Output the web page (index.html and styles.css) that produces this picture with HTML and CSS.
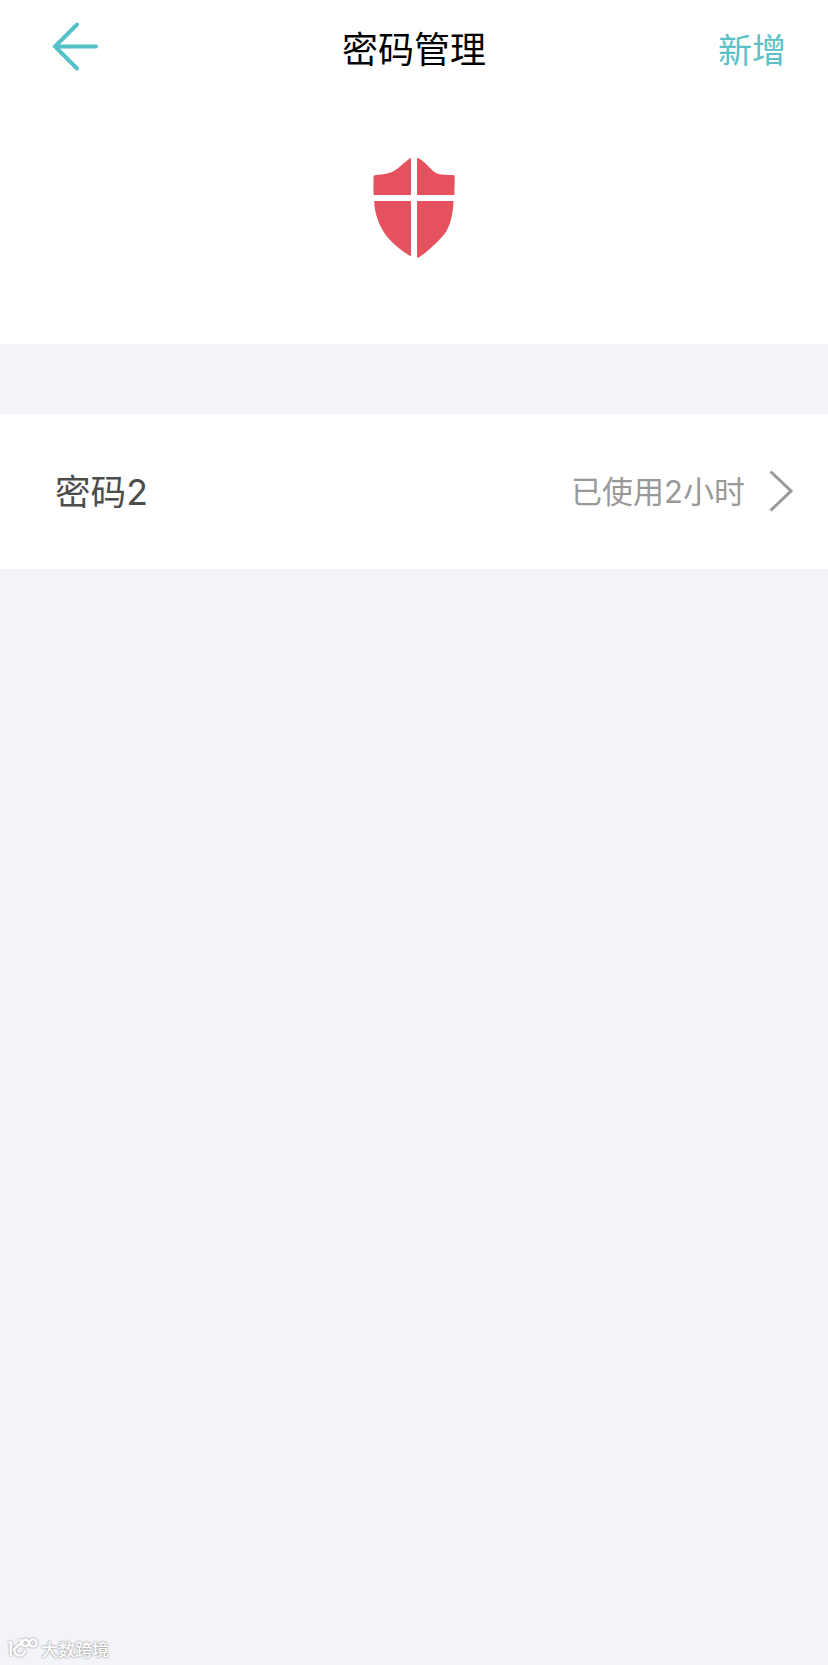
FILE: index.html
```html
<!DOCTYPE html>
<html lang="zh-CN">

<head>
    <meta charset="UTF-8">
    <meta name="viewport" content="width=device-width, initial-scale=1.0">
    <title>密码管理</title>
    <link rel="stylesheet" href="styles.css">
</head>

<body>
    <div class="page">
        <!-- 顶部导航 -->
        <header class="nav">
            <a class="nav_back" href="#" aria-label="返回">
                <svg width="46" height="50" viewBox="0 0 46 50">
                    <path d="M25 2.500 3 24.500l22 22M3 24.500h41" />
                </svg>
            </a>
            <h1 class="nav_title">密码管理</h1>
            <a class="nav_add" href="#">新增</a>
        </header>
        <!-- 盾牌图标 -->
        <div class="banner">
            <svg class="shield" width="82" height="102" viewBox="0 0 82 102">
                <path d="M.5 19.500Q.5 18.500 2 18.300C12 17 17 17 24 12C29 8.500 33 3.500 38 .8V38H.5Z" />
                <path d="M44 .8C50 3 54 8 58 12C64 18 67 17.800 80 18.100Q82 18.100 81.800 20L81.300 38H44Z" />
                <path d="M1.200 44H38V99.500C27 93 16 84 9.500 73C4 63 1.500 54 1.200 44Z" />
                <path d="M44 44H80.500C80 56 78 66 73 75C66 84.500 56 93 46.500 100Q44.500 101 44 100.500Z" />
            </svg>
        </div>
        <!-- 密码列表 -->
        <ul class="list">
            <li class="list_item">
                <span class="list_name">密码2</span>
                <span class="list_time">已使用2小时</span>
                <svg class="list_arrow" width="24" height="42" viewBox="0 0 24 42">
                    <path d="M1.500 1.500 22 21 1.500 40.500" />
                </svg>
            </li>
        </ul>
        <!-- 底部水印 -->
        <footer class="mark">
            <svg width="32" height="22" viewBox="0 0 32 22">
                <path d="M1.500 5.500H4V19M12.500 7 7 12.500Q8 18.500 12.500 18.500Q17 18.500 18 13.500" />
                <path d="M13.500 2v7" />
                <circle cx="18.500" cy="6" r="3.300" />
                <circle cx="26" cy="6" r="3.600" />
            </svg>
            <span>大数跨境</span>
        </footer>
    </div>
</body>

</html>
```

FILE: styles.css
```css
* {
    margin: 0;
    padding: 0;
    box-sizing: border-box;
}

body {
    font-family: Inter, "Noto Sans CJK SC", sans-serif;
    background: #f2f4f9;
}

a {
    text-decoration: none;
}

.page {
    display: flex;
    flex-direction: column;
    min-height: 1665px;
}

.nav {
    display: grid;
    grid-template-columns: 1fr auto 1fr;
    align-items: center;
    height: 100px;
    padding: 2px 42px 0 52px;
    background: #fff;
}

.nav_back {
    height: 58px;
}

.nav_back svg {
    display: block;
    fill: none;
    stroke: #54c0c8;
    stroke-width: 4;
    stroke-linecap: round;
}

.nav_title {
    margin: -2px 10px 0 0;
    font-size: 36px;
    font-weight: 400;
    line-height: 50px;
    color: #000;
}

.nav_add {
    justify-self: end;
    font-size: 34px;
    line-height: 50px;
    color: #5bc0c7;
}

.banner {
    height: 244px;
    padding-top: 57px;
    background: #fff;
}

.shield {
    display: block;
    margin: 0 auto;
    fill: #e6515e;
}

.list {
    margin-top: 70px;
    list-style: none;
}

.list_item {
    display: flex;
    align-items: center;
    height: 155px;
    padding: 0 35px 1px 55px;
    background: #fff;
}

.list_name {
    flex: 1;
    margin-top: -3px;
    font-size: 35.600px;
    color: #4d4d4d;
}

.list_time {
    margin-top: -4px;
    font-size: 31px;
    color: #999;
}

.list_arrow {
    margin-left: 24px;
    fill: none;
    stroke: #999;
    stroke-width: 3;
}

/* 水印固定在页面底部 */
.mark {
    display: flex;
    align-items: center;
    height: 32px;
    margin-top: auto;
    padding: 0 0 2px 7px;
    font-size: 17px;
    font-weight: 500;
    color: #fff;
    text-shadow: 0 0 2px #999, 0 0 2px #aaa;
}

.mark svg {
    margin-right: 2px;
    fill: none;
    stroke: #fff;
    stroke-width: 2.400;
    filter: drop-shadow(0 0 1px #888);
}
```
